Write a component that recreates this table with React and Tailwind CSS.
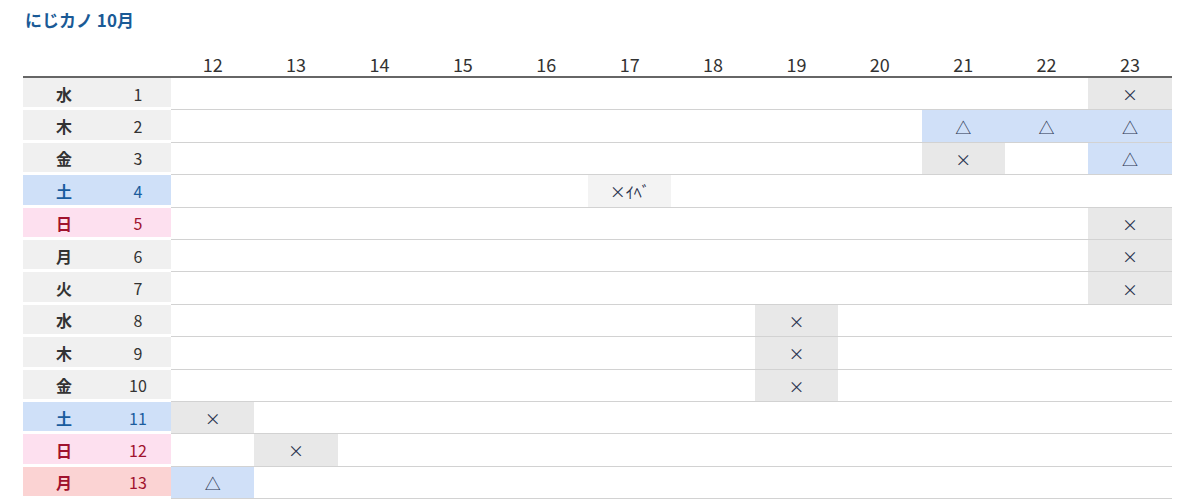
const hours = [12, 13, 14, 15, 16, 17, 18, 19, 20, 21, 22, 23];

// kind: normal | sat | sun | hol
const rows = [
    { wd: '水', d: 1, kind: 'normal', marks: { 23: ['×', 'gray'] } },
    { wd: '木', d: 2, kind: 'normal', marks: { 21: ['△', 'blue'], 22: ['△', 'blue'], 23: ['△', 'blue'] } },
    { wd: '金', d: 3, kind: 'normal', marks: { 21: ['×', 'gray'], 23: ['△', 'blue'] } },
    { wd: '土', d: 4, kind: 'sat', marks: { 17: ['×ｲﾍﾞ', 'light'] } },
    { wd: '日', d: 5, kind: 'sun', marks: { 23: ['×', 'gray'] } },
    { wd: '月', d: 6, kind: 'normal', marks: { 23: ['×', 'gray'] } },
    { wd: '火', d: 7, kind: 'normal', marks: { 23: ['×', 'gray'] } },
    { wd: '水', d: 8, kind: 'normal', marks: { 19: ['×', 'gray'] } },
    { wd: '木', d: 9, kind: 'normal', marks: { 19: ['×', 'gray'] } },
    { wd: '金', d: 10, kind: 'normal', marks: { 19: ['×', 'gray'] } },
    { wd: '土', d: 11, kind: 'sat', marks: { 12: ['×', 'gray'] } },
    { wd: '日', d: 12, kind: 'sun', marks: { 13: ['×', 'gray'] } },
    { wd: '月', d: 13, kind: 'hol', marks: { 12: ['△', 'blue'] } },
];

const leftStyles = {
    normal: 'bg-[#f0f0f0] text-[#333]',
    sat: 'bg-[#cfe0f8] text-[#1a5c9e]',
    sun: 'bg-[#fde0ef] text-[#a0122e]',
    hol: 'bg-[#fbd3d3] text-[#a0122e]',
};

const cellStyles = {
    gray: 'bg-[#e8e8e8]',
    blue: 'bg-[#d0e0f8]',
    light: 'bg-[#f3f3f3]',
};

const App = () => {
    return (
        <div
            className="w-[1199px] h-[499px] bg-white overflow-hidden pl-[23px] pt-[9px]"
            style={{ fontFamily: '"Noto Sans CJK JP", "Noto Sans", sans-serif' }}
        >
            {/* Title */}
            <h1 className="h-[22px] pl-[2px] text-[17px] leading-[22px] font-bold text-[#1a5a96]">
                にじカノ 10月
            </h1>

            {/* Header */}
            <div className="mt-[23px] w-[1149px] flex border-b-2 border-[#666]">
                <div className="w-[148px]" />
                {hours.map((h) => (
                    <div key={h} className="w-[83.4px] h-[22px] text-center text-[18px] leading-[20px] text-[#333]">
                        {h}
                    </div>
                ))}
            </div>

            {/* Rows */}
            {rows.map((r) => (
                <div key={r.d} className="w-[1149px] h-[32.4px] flex">
                    <div className={`w-[148px] flex pt-[2px] border-b-[3px] border-white text-[16px] ${leftStyles[r.kind]}`}>
                        <div className="w-[82px] flex items-center justify-center font-bold">{r.wd}</div>
                        <div className="w-[66px] flex items-center justify-center">{r.d}</div>
                    </div>
                    <div className="flex-1 flex border-b border-[#d2d2d2]">
                        {hours.map((h) => {
                            const m = r.marks[h];
                            return (
                                <div
                                    key={h}
                                    className={`w-[83.4px] flex items-center justify-center pt-[1px] text-[16px] text-[#2b3550] ${m ? cellStyles[m[1]] : ''}`}
                                >
                                    {m ? m[0] : ''}
                                </div>
                            );
                        })}
                    </div>
                </div>
            ))}
        </div>
    );
};

export default App;
